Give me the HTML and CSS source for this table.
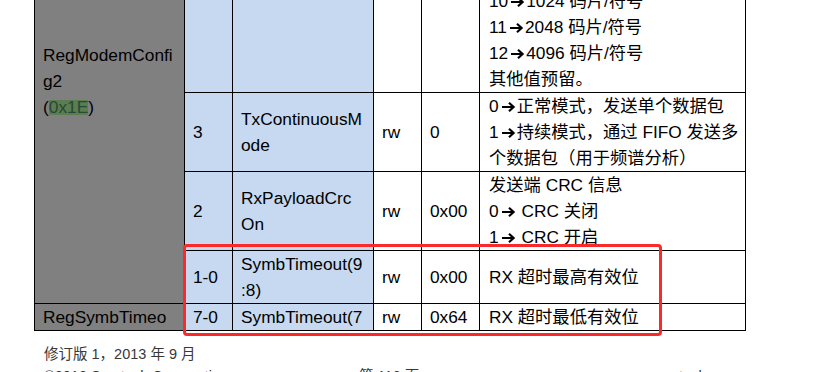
FILE: index.html
```html
<!DOCTYPE html>
<html lang="zh">
<head>
<meta charset="utf-8">
<title>RegModemConfig2</title>
<link rel="stylesheet" href="styles.css">
</head>
<body>
<div class="page">
  <div class="sheet">
    <table class="regs">
      <colgroup>
        <col class="c-reg"><col class="c-bit"><col class="c-name"><col class="c-mode"><col class="c-def"><col class="c-desc">
      </colgroup>
      <tbody>
        <tr>
          <td class="reg" rowspan="4">RegModemConfig2<br>(<span class="hl">0x1E</span>)</td>
          <td class="blue">7-4</td>
          <td class="blue name">SpreadingFactor</td>
          <td>rw</td>
          <td>0x07</td>
          <td class="desc">SF 速率（以 2 为底的对数）<br>6<svg class="arr" viewBox="0 0 15 12"><path d="M1 6H12.5M8 1.8L12.6 6L8 10.2"/></svg>64 码片/符号<br>7<svg class="arr" viewBox="0 0 15 12"><path d="M1 6H12.5M8 1.8L12.6 6L8 10.2"/></svg>128 码片/符号<br>8<svg class="arr" viewBox="0 0 15 12"><path d="M1 6H12.5M8 1.8L12.6 6L8 10.2"/></svg>256 码片/符号<br>9<svg class="arr" viewBox="0 0 15 12"><path d="M1 6H12.5M8 1.8L12.6 6L8 10.2"/></svg>512 码片/符号<br>10<svg class="arr" viewBox="0 0 15 12"><path d="M1 6H12.5M8 1.8L12.6 6L8 10.2"/></svg>1024 码片/符号<br>11<svg class="arr" viewBox="0 0 15 12"><path d="M1 6H12.5M8 1.8L12.6 6L8 10.2"/></svg>2048 码片/符号<br>12<svg class="arr" viewBox="0 0 15 12"><path d="M1 6H12.5M8 1.8L12.6 6L8 10.2"/></svg>4096 码片/符号<br>其他值预留。</td>
        </tr>
        <tr>
          <td class="blue">3</td>
          <td class="blue name">TxContinuousMode</td>
          <td>rw</td>
          <td>0</td>
          <td class="desc">0<svg class="arr" viewBox="0 0 15 12"><path d="M1 6H12.5M8 1.8L12.6 6L8 10.2"/></svg>正常模式，发送单个数据包<br>1<svg class="arr" viewBox="0 0 15 12"><path d="M1 6H12.5M8 1.8L12.6 6L8 10.2"/></svg>持续模式，通过 FIFO 发送多<br>个数据包（用于频谱分析）</td>
        </tr>
        <tr>
          <td class="blue">2</td>
          <td class="blue name">RxPayloadCrcOn</td>
          <td>rw</td>
          <td>0x00</td>
          <td class="desc">发送端 CRC 信息<br>0<svg class="arr" viewBox="0 0 15 12"><path d="M1 6H12.5M8 1.8L12.6 6L8 10.2"/></svg> CRC 关闭<br>1<svg class="arr" viewBox="0 0 15 12"><path d="M1 6H12.5M8 1.8L12.6 6L8 10.2"/></svg> CRC 开启</td>
        </tr>
        <tr>
          <td class="blue">1-0</td>
          <td class="blue name">SymbTimeout(9:8)</td>
          <td>rw</td>
          <td>0x00</td>
          <td class="desc">RX 超时最高有效位</td>
        </tr>
        <tr>
          <td class="reg">RegSymbTimeo</td>
          <td class="blue">7-0</td>
          <td class="blue name">SymbTimeout(7</td>
          <td>rw</td>
          <td>0x64</td>
          <td class="desc">RX 超时最低有效位</td>
        </tr>
      </tbody>
    </table>
    <div class="mark"></div>
  </div>
  <footer class="foot">
    <p class="rev">修订版 1，2013 年 9 月</p>
    <div class="foot-row">
      <span class="copy">©2013 Semtech Corporation</span>
      <span class="pg">第 116 页</span>
      <span class="web">www.semtech.com</span>
    </div>
  </footer>
</div>
</body>
</html>
```
FILE: styles.css
```css
html, body {
  margin: 0;
  background: #fff;
}
body {
  font-family: "Liberation Sans", "Noto Sans CJK SC", sans-serif;
  color: #000;
  overflow: hidden;
}
.page {
  padding-left: 34px;
}
.sheet {
  position: relative;
  width: max-content;
  margin-top: -143px;
}
.regs {
  border-collapse: collapse;
  table-layout: fixed;
  width: 712px;
  font-size: 17.3px;
  line-height: 26px;
}
.c-reg { width: 150px; }
.c-bit { width: 48px; }
.c-name { width: 141px; }
.c-mode { width: 48px; }
.c-def { width: 58px; }
.c-desc { width: 266px; }
.regs td {
  border: 1px solid #000;
  padding: 0 8px;
  vertical-align: middle;
  overflow-wrap: anywhere;
  background: #fff;
}
.regs td.reg {
  background: #808080;
}
.regs td.blue {
  background: #c6d9f0;
}
.regs td.name {
  padding-right: 9px;
}
.regs td.desc {
  padding-left: 9px;
  white-space: nowrap;
}
.hl {
  color: #26493a;
  background: linear-gradient(transparent 14%, #5b7d4f 14%, #5b7d4f 88%, transparent 88%);
}
.arr {
  width: 15px;
  height: 12px;
  margin: 0 1px 0 2px;
  vertical-align: -1px;
  fill: none;
  stroke: #000;
  stroke-width: 2.2;
  stroke-linejoin: miter;
}
.mark {
  position: absolute;
  left: 149px;
  top: 387px;
  width: 479px;
  height: 92px;
  box-sizing: border-box;
  border: 3px solid #fb2a2a;
  border-radius: 4px;
}
.foot {
  padding-left: 10px;
  margin-top: 12px;
  font-family: "Liberation Sans", "Noto Sans CJK SC", sans-serif;
  font-size: 14.5px;
  line-height: 22px;
  color: #383838;
}
.rev {
  margin: 0;
}
.foot-row {
  display: flex;
}
.copy { width: 315px; }
.pg { width: 258px; }
```
